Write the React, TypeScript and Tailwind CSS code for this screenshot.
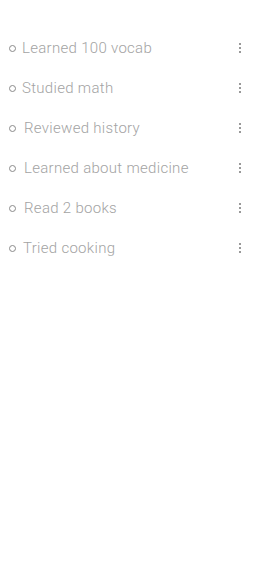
const items = [
  { gap: "ml-[6px]", label: "Learned 100 vocab" },
  { gap: "ml-[6px]", label: "Studied math" },
  { gap: "ml-[8px]", label: "Reviewed history" },
  { gap: "ml-[8px]", label: "Learned about medicine" },
  { gap: "ml-[8px]", label: "Read 2 books" },
  { gap: "ml-[7px]", label: "Tried cooking" },
];

function MoreDots() {
  return (
    <div className="flex flex-col items-center gap-[2px]">
      <span className="block h-[2px] w-[2px] bg-[#999]" />
      <span className="block h-[2px] w-[2px] bg-[#999]" />
      <span className="block h-[2px] w-[2px] bg-[#999]" />
    </div>
  );
}

export default function App() {
  return (
    <div className="min-h-[573px] w-[265px] bg-white font-['Roboto',sans-serif] font-light text-[#a3a3a3]">
      <ul className="pt-[28px]">
        {items.map((item) => (
          <li
            className="flex h-[40px] items-center justify-between pl-[9px] pr-[24px]"
            key={item.label}
          >
            <span className="flex items-center text-[15px] tracking-[0.3px]">
              <span className="block h-[7px] w-[7px] rounded-full border border-[#8a8a8a]" />
              <span className={item.gap}>{item.label}</span>
            </span>
            <MoreDots />
          </li>
        ))}
      </ul>
    </div>
  );
}
